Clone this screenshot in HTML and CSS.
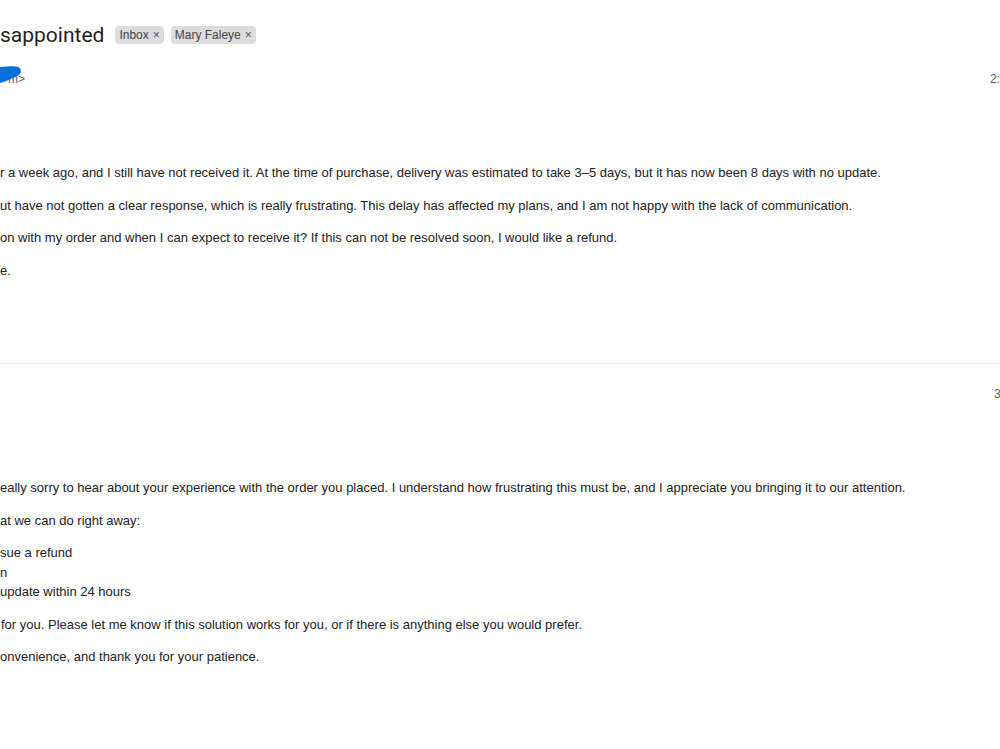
FILE: index.html
```html
<!DOCTYPE html>
<html lang="en">
<head>
<meta charset="utf-8">
<title>Order disappointed</title>
<link rel="stylesheet" href="styles.css">
</head>
<body>
<div class="page">
  <div class="subject-row">
    <h2 class="subject">sappointed</h2>
    <span class="chip">Inbox <span class="chip-x">×</span></span>
    <span class="chip">Mary Faleye <span class="chip-x">×</span></span>
  </div>

  <div class="msg msg-first">
    <div class="msg-head">
      <div class="sender">
        <span class="email">m&gt;</span>
        <svg class="scribble" width="30" height="24" viewBox="0 0 30 24" aria-hidden="true">
          <path d="M-4 3.5 C 6 2.5, 14 1.5, 18 3 C 22 5, 22 10, 17 12 C 13 14, 8 16.5, 2 18.5 C 0 19, -3 19, -4 19 Z" fill="#0b6fdc"/>
        </svg>
      </div>
      <div class="time">2:54 PM</div>
    </div>
    <div class="msg-body">
      <p>r a week ago, and I still have not received it. At the time of purchase, delivery was estimated to take 3–5 days, but it has now been 8 days with no update.</p>
      <p>ut have not gotten a clear response, which is really frustrating. This delay has affected my plans, and I am not happy with the lack of communication.</p>
      <p>on with my order and when I can expect to receive it? If this can not be resolved soon, I would like a refund.</p>
      <p>e.</p>
    </div>
  </div>

  <hr class="divider">

  <div class="msg">
    <div class="msg-head">
      <div class="sender"></div>
      <div class="time time-late">3:02 PM</div>
    </div>
    <div class="msg-body">
      <p>eally sorry to hear about your experience with the order you placed. I understand how frustrating this must be, and I appreciate you bringing it to our attention.</p>
      <p>at we can do right away:</p>
      <ul class="options">
        <li>sue a refund</li>
        <li>n</li>
        <li>update within 24 hours</li>
      </ul>
      <p class="indent1">for you. Please let me know if this solution works for you, or if there is anything else you would prefer.</p>
      <p>onvenience, and thank you for your patience.</p>
    </div>
  </div>
</div>
</body>
</html>
```

FILE: styles.css
```css
html, body {
  margin: 0;
  padding: 0;
  background: #ffffff;
}

.page {
  width: 1000px;
  height: 749px;
  overflow: hidden;
  font-family: "Liberation Sans", Arial, sans-serif;
  color: #222222;
}

.subject-row {
  display: flex;
  align-items: center;
  padding-top: 21px;
  height: 28px;
}

.subject {
  margin: 0 11px 0 0;
  font-family: Roboto, "Open Sans", sans-serif;
  font-weight: 400;
  font-size: 21px;
  line-height: 28px;
  color: #1f1f1f;
  white-space: nowrap;
}

.chip {
  display: inline-flex;
  align-items: center;
  height: 18px;
  padding: 0 4px 0 4px;
  margin-right: 7px;
  background: #dddddd;
  border-radius: 4px;
  font-family: "Liberation Sans", Arial, sans-serif;
  font-size: 12px;
  color: #444444;
  white-space: nowrap;
}

.chip-x {
  margin-left: 4px;
  font-size: 12px;
  color: #555555;
}

.msg-head {
  display: flex;
  align-items: center;
  height: 20px;
  margin-top: 20px;
  margin-right: -80px;
}

.sender {
  position: relative;
  flex: 1;
  height: 20px;
}

.email {
  display: inline-block;
  padding-left: 8px;
  font-size: 12px;
  line-height: 20px;
  color: #5e5e5e;
}

.scribble {
  position: absolute;
  left: 0;
  top: -5px;
}

.time {
  width: 90px;
  font-size: 12px;
  line-height: 20px;
  color: #5e5e5e;
  white-space: nowrap;
}

.time-late {
  width: 86px;
}

.msg-body {
  margin-top: 74px;
  font-size: 13px;
  line-height: 19.5px;
  white-space: nowrap;
}

.msg-body p {
  margin: 0 0 13px 0;
}

.msg-body p:last-child {
  margin-bottom: 0;
}

.msg-first .msg-body {
  padding-bottom: 83px;
}

.options {
  margin: 0 0 13px 0;
  padding: 0;
  list-style: none;
}

.indent1 {
  padding-left: 1px;
}

.divider {
  margin: 0;
  border: 0;
  height: 1px;
  background: #eceff1;
}
```
